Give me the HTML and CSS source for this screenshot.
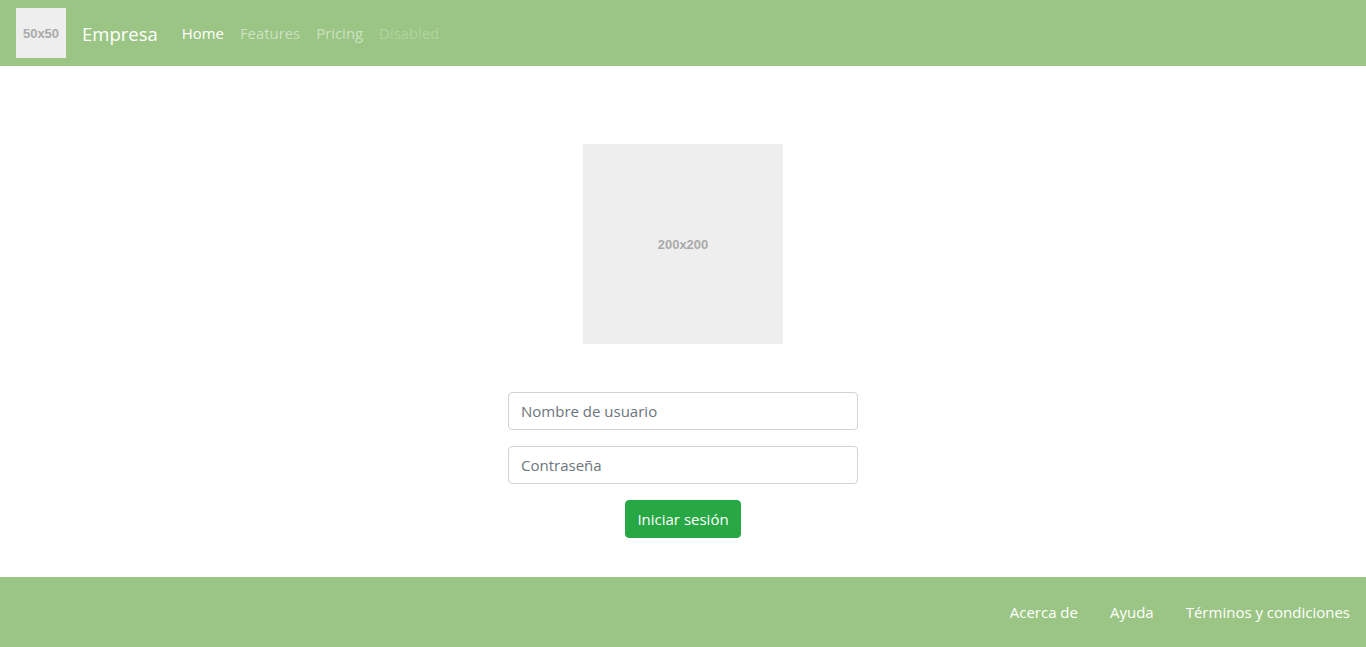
FILE: index.html
```html
<!DOCTYPE html>
<html lang="es">
<head>
<meta charset="utf-8">
<title>Empresa</title>
<link rel="stylesheet" href="styles.css">
</head>
<body>
<header class="navbar">
  <div class="logo">50x50</div>
  <a class="brand" href="#">Empresa</a>
  <nav class="nav">
    <a class="nav-link active" href="#">Home</a>
    <a class="nav-link" href="#">Features</a>
    <a class="nav-link" href="#">Pricing</a>
    <a class="nav-link disabled" href="#">Disabled</a>
  </nav>
</header>
<main class="main">
  <div class="hero-img">200x200</div>
  <form class="login">
    <input class="field" type="text" placeholder="Nombre de usuario">
    <input class="field" type="password" placeholder="Contraseña">
    <button class="btn" type="button">Iniciar sesión</button>
  </form>
</main>
<footer class="footer">
  <a href="#">Acerca de</a>
  <a href="#">Ayuda</a>
  <a href="#">Términos y condiciones</a>
</footer>
</body>
</html>
```
FILE: styles.css
```css
* { box-sizing: border-box; }
html, body { margin: 0; padding: 0; }
body {
  font-family: "Open Sans", "Noto Sans", sans-serif;
  font-size: 16px;
  color: #212529;
  background: #fff;
  display: flex;
  flex-direction: column;
  min-height: 647px;
}
a { text-decoration: none; }

.navbar {
  background: #9bc584;
  height: 66px;
  padding: 8px 16px;
  display: flex;
  align-items: center;
}
.logo {
  width: 50px;
  height: 50px;
  background: #eee;
  color: #aaa;
  font-family: "Liberation Sans", Arial, sans-serif;
  font-weight: bold;
  font-size: 13px;
  display: flex;
  align-items: center;
  justify-content: center;
}
.brand {
  color: #fff;
  font-size: 18.5px;
  margin-left: 16px;
  margin-right: 16px;
}
.nav { display: flex; }
.nav-link {
  color: rgba(255,255,255,.5);
  padding: 8px;
  font-size: 14.9px;
}
.nav-link.active { color: #fff; }
.nav-link.disabled { color: rgba(255,255,255,.25); }

.main {
  flex: 1;
  display: flex;
  flex-direction: column;
  align-items: center;
  padding-top: 78px;
}
.hero-img {
  width: 200px;
  height: 200px;
  background: #eee;
  color: #aaa;
  font-family: "Liberation Sans", Arial, sans-serif;
  font-weight: bold;
  font-size: 13px;
  display: flex;
  align-items: center;
  justify-content: center;
}
.login {
  margin-top: 48px;
  width: 350px;
  display: flex;
  flex-direction: column;
  align-items: center;
}
.field {
  width: 100%;
  height: 38px;
  border: 1px solid #ced4da;
  border-radius: 4px;
  padding: 6px 12px;
  font-family: inherit;
  font-size: 15px;
  color: #495057;
  margin-bottom: 16px;
}
.field::placeholder { color: #6c757d; }
.btn {
  height: 38px;
  background: #28a745;
  border: 1px solid #28a745;
  border-radius: 4px;
  color: #fff;
  font-family: inherit;
  font-size: 15px;
  padding: 0 11px;
  white-space: nowrap;
}

.footer {
  background: #9bc584;
  height: 70px;
  display: flex;
  justify-content: flex-end;
  align-items: center;
  gap: 32px;
  padding: 0 16px;
}
.footer a {
  color: #fff;
  font-size: 15px;
}
```
